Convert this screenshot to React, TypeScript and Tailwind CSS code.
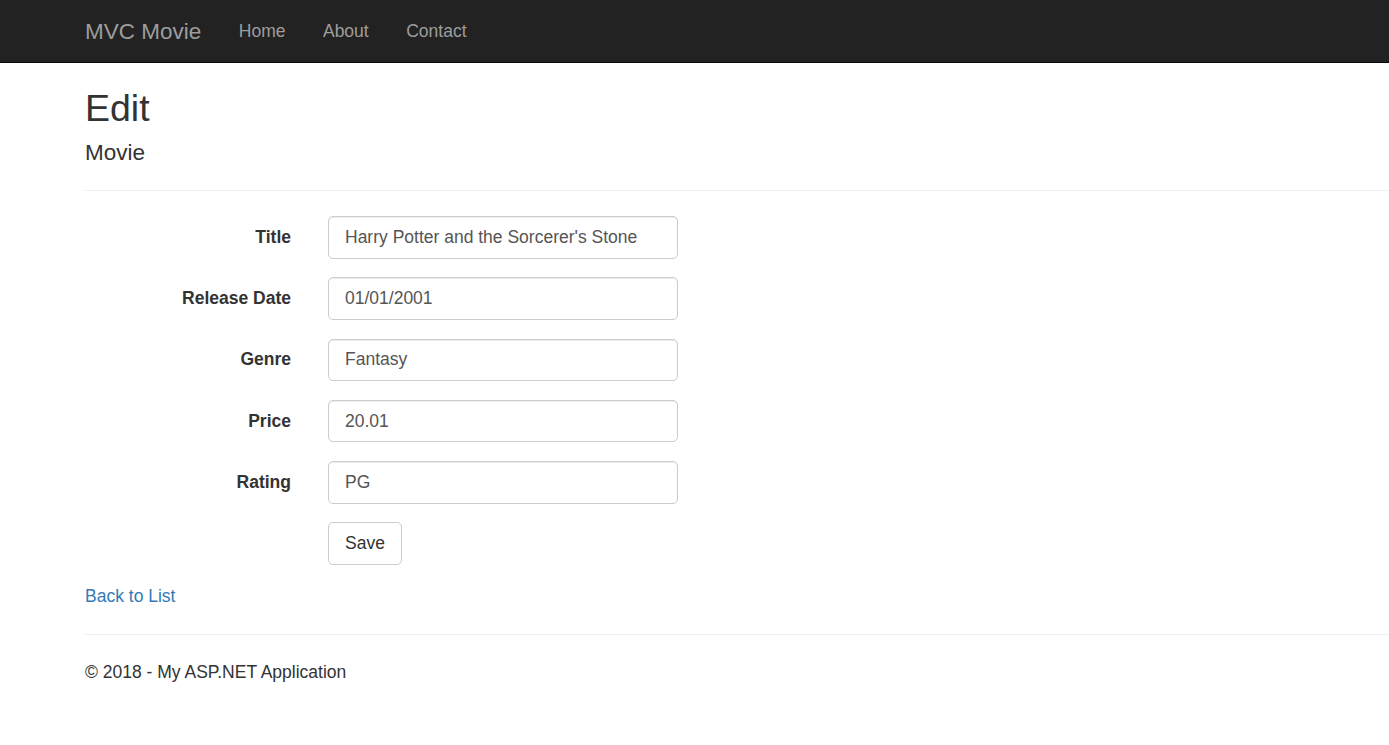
import React from "react";

const font = { fontFamily: '"Liberation Sans", Arial, Helvetica, sans-serif' };

const fields = [
  { label: "Title", value: "Harry Potter and the Sorcerer's Stone" },
  { label: "Release Date", value: "01/01/2001" },
  { label: "Genre", value: "Fantasy" },
  { label: "Price", value: "20.01" },
  { label: "Rating", value: "PG" },
];

export default function App() {
  return (
    <div className="min-h-screen bg-white text-[#333] text-[17.5px] leading-[25px] font-['Liberation_Sans',Arial,sans-serif]">
      {/* navbar */}
      <nav className="h-[63px] bg-[#222] border-b border-[#080808] flex items-center pl-[85px]">
        <a href="#" className="text-[22.5px] leading-[25px] text-[#9d9d9d] no-underline">
          MVC Movie
        </a>
        <ul className="flex ml-[18.75px]">
          {["Home", "About", "Contact"].map((item) => (
            <li key={item}>
              <a href="#" className="block px-[18.75px] text-[17.5px] text-[#9d9d9d]">
                {item}
              </a>
            </li>
          ))}
        </ul>
      </nav>

      <div className="pl-[85px]">
        <h2 className="mt-[25px] text-[37.5px] leading-[41.25px] font-normal">Edit</h2>
        <h4 className="mt-[11.5px] text-[22.5px] leading-[24.75px] font-normal">Movie</h4>
        <hr className="mt-[24px] mb-[25.5px] border-0 border-t border-[#eee]" />

        <form onSubmit={(e) => e.preventDefault()}>
          {fields.map((f) => (
            <div key={f.label} className="flex items-start mb-[18.75px]">
              <label className="w-[206px] shrink-0 text-right font-bold pt-[8.75px]">{f.label}</label>
              <input
                type="text"
                readOnly
                value={f.value}
                className="ml-[37px] w-[350px] h-[42.5px] pl-[16px] pr-[15px] py-[7.5px] border border-[#ccc] rounded-[5px] text-[#555] text-[17.5px] outline-none shadow-[inset_0_1px_1px_rgba(0,0,0,0.075)]"
                style={font}
              />
            </div>
          ))}
          <div className="flex mb-[19px]">
            <div className="w-[206px] shrink-0" />
            <button
              type="submit"
              className="ml-[37px] h-[42.5px] px-[16px] border border-[#ccc] rounded-[5px] bg-white text-[#333] text-[17.5px]"
              style={font}
            >
              Save
            </button>
          </div>
        </form>

        <div>
          <a href="#" className="text-[#337ab7]">
            Back to List
          </a>
        </div>

        <hr className="mt-[25px] mb-[25px] border-0 border-t border-[#eee]" />
        <footer>
          <p>&copy; 2018 - My ASP.NET Application</p>
        </footer>
      </div>
    </div>
  );
}
